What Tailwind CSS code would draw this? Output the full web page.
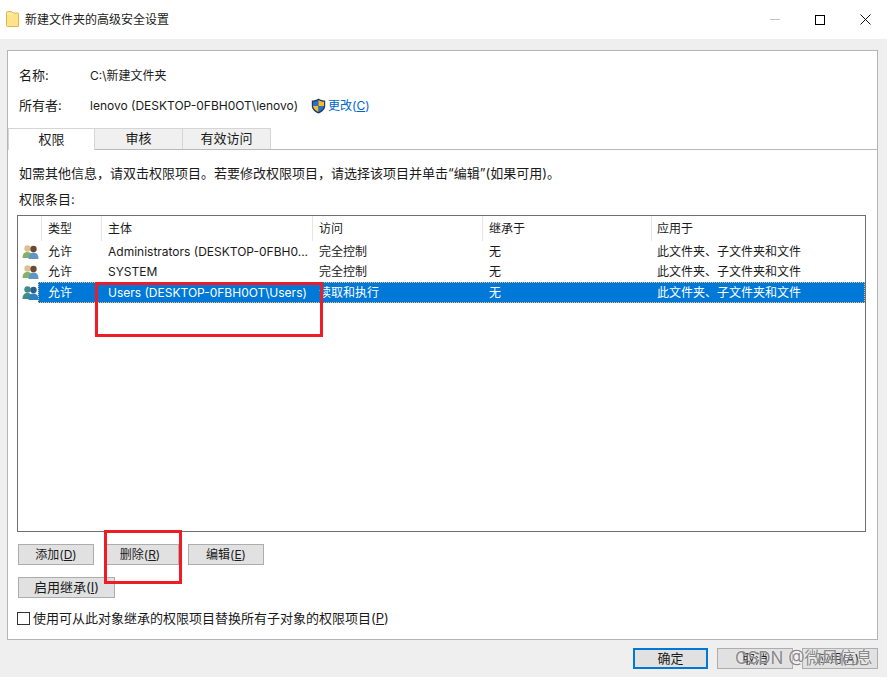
<!doctype html>
<html><head><meta charset="utf-8"><script src="https://cdn.jsdelivr.net/npm/@tailwindcss/browser@4"></script></head>
<body class="bg-white">
<div class="relative w-[893px] h-[699px] overflow-hidden bg-white text-[12px] leading-[16px] text-[#1a1a1a] font-['Inter','Noto_Sans_CJK_SC',sans-serif]">
  <div class="w-[887px]">
    <div class="h-[39px] flex items-center relative">
      <svg class="ml-[6px] mt-[-1px]" width="13" height="16" viewBox="0 0 13 16"><path d="M0.5 1.5 Q0.5 .5 1.5 .5 H5.5 L7 2 H12 Q12.5 2 12.5 3 V15.5 H1.5 Q0.5 15.5 .5 14.5 Z" fill="#ffe38a" stroke="#dfb64e"/><path d="M1 3 H7" stroke="#fff3c4"/></svg>
      <span class="ml-[6px]">新建文件夹的高级安全设置</span>
      <div class="ml-auto flex items-center">
        <div class="w-[10px] h-px bg-[#c4c4c4] mr-[35px]"></div>
        <div class="w-[10px] h-[10px] border border-black mr-[35px]"></div>
        <svg class="mr-[16px]" width="11" height="11" viewBox="0 0 11 11"><path d="M.5 .5 10.5 10.5M10.5 .5 .5 10.5" stroke="#111" fill="none"/></svg>
      </div>
    </div>
    <div class="h-[638px] bg-[#efefef] pt-[11px] pl-[7px] pr-[9px] flex flex-col">
      <div class="h-[590px] w-[871px] bg-white border border-[#b4b4b4] relative flex flex-col">
        <div class="flex pl-[11px] mt-[17px] h-[16px]"><span class="w-[71px] text-[13px] -mt-px">名称:</span><span>C:\新建文件夹</span></div>
        <div class="flex items-center pl-[11px] mt-[14px] h-[16px]"><span class="w-[71px] text-[13px] -mt-[2px]">所有者:</span><span>lenovo (DESKTOP-0FBH0OT\lenovo)</span>
          <svg class="ml-[13px]" width="15" height="16" viewBox="0 0 15 16"><path d="M7.5 .5 C5.5 2 3 2.6 .8 2.6 V8 C.8 11.5 4 14.3 7.5 15.5 C11 14.3 14.2 11.5 14.2 8 V2.6 C12 2.6 9.5 2 7.5 .5 Z" fill="#1b3a6e"/><path d="M7.5 2 V8 H2 V3.8 C4 3.7 6 3.1 7.5 2 Z" fill="#2a70c4"/><path d="M7.5 2 V8 H13 V3.8 C11 3.7 9 3.1 7.5 2 Z" fill="#f4bd2c"/><path d="M7.5 8 H2 C2.3 10.7 4.8 12.9 7.5 14 Z" fill="#f4bd2c"/><path d="M7.5 8 H13 C12.7 10.7 10.2 12.9 7.5 14 Z" fill="#2a70c4"/></svg>
          <span class="ml-[2px] text-[#0066cc]">更改(<span class="underline">C</span>)</span></div>
        <div class="flex mt-[14px] h-[22px] border-b border-[#b9b9b9] relative">
          <div class="w-[87px] h-[22px] pb-[2px] bg-white border-t border-r border-l border-[#d5d5d5] text-[13px] flex items-center justify-center z-10">权限</div>
          <div class="w-[88px] h-[21px] pb-[2px] bg-[#f0f0f0] border-t border-r border-[#d5d5d5] text-[13px] flex items-center justify-center">审核</div>
          <div class="w-[88px] h-[21px] pb-[2px] bg-[#f0f0f0] border-t border-r border-[#d5d5d5] text-[13px] flex items-center justify-center">有效访问</div>
        </div>
        <div class="pl-[11px] mt-[15px] h-[16px] text-[13px]">如需其他信息，请双击权限项目。若要修改权限项目，请选择该项目并单击“编辑”(如果可用)。</div>
        <div class="pl-[11px] mt-[10px] h-[16px] text-[13px]">权限条目:</div>
        <div class="ml-[9px] mt-[8px] w-[849px] h-[317px] border border-[#6f6f6f] bg-white">
          <div class="grid grid-cols-[24px_60px_211px_170px_169px_1fr] h-[25px] items-center">
            <span class="h-full border-r border-[#e5e5e5]"></span>
            <span class="h-full border-r border-[#e5e5e5] pl-[6px] flex items-center">类型</span>
            <span class="h-full border-r border-[#e5e5e5] pl-[6px] flex items-center">主体</span>
            <span class="h-full border-r border-[#e5e5e5] pl-[6px] flex items-center">访问</span>
            <span class="h-full border-r border-[#e5e5e5] pl-[6px] flex items-center">继承于</span>
            <span class="pl-[5px]">应用于</span>
          </div>
          <div class="grid grid-cols-[24px_60px_211px_170px_169px_1fr] h-[21px] items-center">
            <svg class="ml-[4px]" width="17" height="16" viewBox="0 0 17 16"><circle cx="5.5" cy="4.5" r="3.2" fill="#e0bf8e"/><path d="M0.5 14 C0.5 9 3 8 5.5 8 C8 8 10 9 10 14 Z" fill="#86b06a"/><circle cx="11.5" cy="5" r="3.2" fill="#6b4a34"/><path d="M6.5 15 C6.5 10 9 8.6 11.5 8.6 C14 8.6 16.5 10 16.5 15 Z" fill="#5f97c4"/></svg>
            <span class="pl-[6px]">允许</span><span class="pl-[6px]">Administrators (DESKTOP-0FBH0...</span><span class="pl-[6px]">完全控制</span><span class="pl-[6px]">无</span><span class="pl-[5px]">此文件夹、子文件夹和文件</span>
          </div>
          <div class="grid grid-cols-[24px_60px_211px_170px_169px_1fr] h-[20px] items-center">
            <svg class="ml-[4px]" width="17" height="16" viewBox="0 0 17 16"><circle cx="5.5" cy="4.5" r="3.2" fill="#e0bf8e"/><path d="M0.5 14 C0.5 9 3 8 5.5 8 C8 8 10 9 10 14 Z" fill="#86b06a"/><circle cx="11.5" cy="5" r="3.2" fill="#6b4a34"/><path d="M6.5 15 C6.5 10 9 8.6 11.5 8.6 C14 8.6 16.5 10 16.5 15 Z" fill="#5f97c4"/></svg>
            <span class="pl-[6px]">允许</span><span class="pl-[6px]">SYSTEM</span><span class="pl-[6px]">完全控制</span><span class="pl-[6px]">无</span><span class="pl-[5px]">此文件夹、子文件夹和文件</span>
          </div>
          <div class="grid grid-cols-[24px_60px_211px_170px_169px_1fr] h-[21px] items-center">
            <svg class="ml-[4px]" width="17" height="16" viewBox="0 0 17 16"><circle cx="5.5" cy="4.5" r="3.2" fill="#3f8a8a"/><path d="M0.5 14 C0.5 9 3 8 5.5 8 C8 8 10 9 10 14 Z" fill="#3b8f83"/><circle cx="11.5" cy="5" r="3.2" fill="#2d5f8c"/><path d="M6.5 15 C6.5 10 9 8.6 11.5 8.6 C14 8.6 16.5 10 16.5 15 Z" fill="#2f7fc4"/></svg>
            <div class="col-span-5 -ml-[4px] h-full bg-[#0078d7] outline outline-1 -outline-offset-1 outline-dotted outline-[#f0c070] text-white grid grid-cols-[64px_211px_170px_169px_1fr] items-center">
              <span class="pl-[10px]">允许</span><span class="pl-[6px]">Users (DESKTOP-0FBH0OT\Users)</span><span class="pl-[6px]">读取和执行</span><span class="pl-[6px]">无</span><span class="pl-[5px]">此文件夹、子文件夹和文件</span>
            </div>
          </div>
        </div>
        <div class="flex ml-[10px] mt-[12px] h-[21px]">
          <div class="w-[76px] bg-[#e1e1e1] border border-[#adadad] flex items-center justify-center">添加(<span class="underline">D</span>)</div>
          <div class="ml-[10px] w-[75px] pr-[3px] bg-[#e1e1e1] border border-[#adadad] flex items-center justify-center">删除(<span class="underline">R</span>)</div>
          <div class="ml-[9px] w-[76px] bg-[#e1e1e1] border border-[#adadad] flex items-center justify-center">编辑(<span class="underline">E</span>)</div>
        </div>
        <div class="ml-[10px] mt-[12px] h-[21px] w-[97px] pb-[2px] bg-[#e1e1e1] border border-[#adadad] text-[13px] flex items-center justify-center">启用继承(<span class="underline">I</span>)</div>
        <div class="flex items-center ml-[9px] mt-[12px] h-[16px] text-[13px]"><div class="w-[13px] h-[13px] border border-[#333] bg-white mr-[3px]"></div><span class="-mt-px">使用可从此对象继承的权限项目替换所有子对象的权限项目(<span class="underline">P</span>)</span></div>
      </div>
      <div class="flex justify-end w-[871px] mt-[8px] h-[21px]">
        <div class="w-[75px] pb-[2px] border-2 border-[#0078d7] bg-[#e1e1e1] text-[13px] flex items-center justify-center">确定</div>
        <div class="ml-[9px] w-[76px] pb-[2px] border border-[#adadad] bg-[#e1e1e1] text-[13px] flex items-center justify-center">取消</div>
        <div class="ml-[9px] w-[76px] border border-[#adadad] bg-[#e1e1e1] flex items-center justify-center pr-[3px]">应用(<span class="underline">A</span>)</div>
      </div>
    </div>
  </div>
  <div class="absolute left-[735px] top-[646px] text-[17px] leading-[24px] text-[#8a8a8a] [text-shadow:0_0_2px_white]">CSDN @微风信息</div>
  <div class="absolute left-[95px] top-[282px] w-[228px] h-[55px] border-[3px] border-[#ee1c25]"></div>
  <div class="absolute left-[104px] top-[530px] w-[78px] h-[54px] border-[3px] border-[#ee1c25]"></div>
</div>
</body></html>
